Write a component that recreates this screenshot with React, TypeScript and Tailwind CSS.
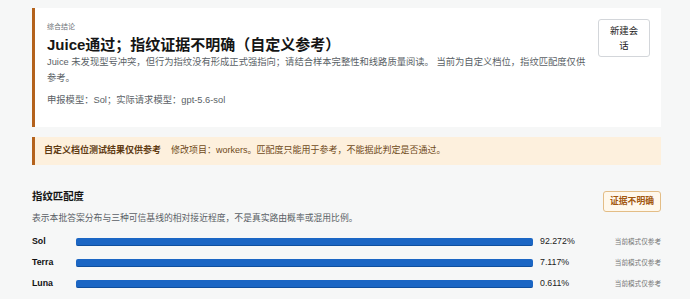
const rows = [
  { name: "Sol", value: "92.272%" },
  { name: "Terra", value: "7.117%" },
  { name: "Luna", value: "0.611%" },
]

const App = () => {
  return (
    <div
      className="h-[299px] w-[690px] overflow-hidden bg-[#f6f7f7] pl-[32px] pt-[8px] text-[#1f2328]"
      style={{ fontFamily: '"Liberation Sans", "Noto Sans CJK SC", sans-serif' }}
    >
      {/* Summary card */}
      <div className="flex h-[119px] w-[629px] justify-between border-l-[3px] border-[#b4621c] bg-white pl-[12px] pr-[11px] pt-[11px]">
        <div className="w-[540px]">
          <div className="mt-[2px] text-[7px] leading-[12px] text-[#6b7075]">综合结论</div>
          <h1 className="mt-[2px] text-[15px] font-bold leading-[20px] text-[#151515]">
            Juice通过；指纹证据不明确（自定义参考）
          </h1>
          <p className="text-[9.3px] leading-[15.5px] text-[#5a5f66]">
            Juice 未发现型号冲突，但行为指纹没有形成正式强指向；请结合样本完整性和线路质量阅读。 当前为自定义档位，指纹匹配度仅供参考。
          </p>
          <p className="mt-[6.5px] text-[9.3px] leading-[15px] text-[#5a5f66]">
            申报模型：Sol；实际请求模型：gpt-5.6-sol
          </p>
        </div>
        <button className="h-[38px] w-[52px] self-start rounded-[3px] border border-[#d3d6da] bg-white px-[7px] text-[9.4px] leading-[15px] text-[#222]">
          新建会话
        </button>
      </div>

      {/* Notice */}
      <div className="mt-[10px] flex h-[28px] w-[629px] items-center border-l-[3px] border-[#b4621c] bg-[#fdf0dd] pl-[9px] text-[9px]">
        <span className="font-bold text-[#5e3a12]">自定义档位测试结果仅供参考</span>
        <span className="ml-[10px] text-[#6f4a20]">
          修改项目：workers。匹配度只能用于参考，不能据此判定是否通过。
        </span>
      </div>

      {/* Fingerprint match */}
      <div className="mt-[24px] flex w-[629px] items-start justify-between">
        <div>
          <h2 className="text-[10.4px] font-bold leading-[16px] text-[#151515]">指纹匹配度</h2>
          <p className="mt-[6px] text-[8.8px] leading-[14px] text-[#5a5f66]">
            表示本批答案分布与三种可信基线的相对接近程度，不是真实路由概率或混用比例。
          </p>
        </div>
        <span className="mt-[2px] flex h-[21px] items-center rounded-[3px] border border-[#e3bd86] bg-[#fff8ec] px-[6px] text-[8.8px] font-bold text-[#a3580f]">
          证据不明确
        </span>
      </div>

      <div className="mt-[6px] flex w-[629px] flex-col">
        {rows.map((r) => (
          <div key={r.name} className="flex h-[21px] items-center">
            <span className="w-[44px] text-[8.8px] font-bold text-[#111]">{r.name}</span>
            <div className="h-[8px] w-[457px] rounded-[2px] border-b border-[#0f4f9e] bg-[#1b66c4]" />
            <span className="ml-[7px] text-[8.8px] text-[#222]">{r.value}</span>
            <span className="ml-auto text-[6.6px] text-[#777]">当前模式仅参考</span>
          </div>
        ))}
      </div>
    </div>
  )
}

export default App
